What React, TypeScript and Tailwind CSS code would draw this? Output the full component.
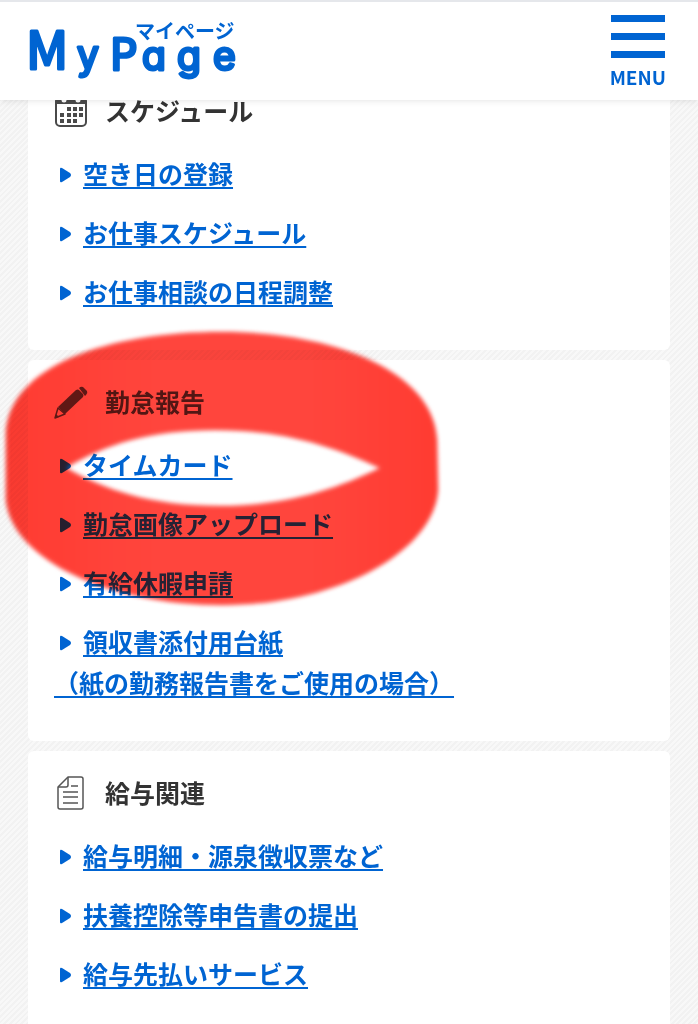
import { ReactNode } from 'react'

type MenuLink = { label: string; note?: string }
type MenuGroup = { title: string; icon: ReactNode; links: MenuLink[] }

function CalendarIcon() {
  return (
    <svg viewBox="0 0 34 36" className="w-[34px] h-9" fill="none" aria-hidden="true">
      <rect x="2" y="5" width="30" height="29" rx="4" stroke="#4a4a4a" strokeWidth="2" />
      <path d="M2 12V8q0-3 3-3h24q3 0 3 3v4z" fill="#4a4a4a" />
      <path d="M10 2v6M24 2v6" stroke="#fff" strokeWidth="5" strokeLinecap="round" />
      <path d="M10 2v5M24 2v5" stroke="#4a4a4a" strokeWidth="2" strokeLinecap="round" />
      <path
        d="M13 15h4v4h-4zM19 15h4v4h-4zM25 15h4v4h-4zM6 21h4v4H6zM13 21h4v4h-4zM19 21h4v4h-4zM25 21h4v4h-4zM6 27h4v4H6zM13 27h4v4h-4zM19 27h4v4h-4z"
        fill="#4a4a4a"
      />
    </svg>
  )
}

function PencilIcon() {
  return (
    <svg viewBox="0 -1 34 36" className="w-[34px] h-9" aria-hidden="true">
      <path d="M4 23 22 6q2-1 3 0l4 4q1 1 0 3L11 30z" fill="#444" />
      <path d="M25 4q2-2 4-1l4 4q1 2-1 4l-1 1z" fill="#444" />
      <path d="M4 24 1 34l10-4z" fill="none" stroke="#444" strokeWidth="1.5" strokeLinejoin="round" />
      <path d="M1 34l1-4 3 3z" fill="#444" />
    </svg>
  )
}

function DocumentIcon() {
  return (
    <svg viewBox="0 -1 34 36" className="w-[34px] h-9" fill="none" stroke="#555" strokeWidth="1.5" aria-hidden="true">
      <path d="M14 2h13q2 0 2 2v28q0 2-2 2H6q-2 0-2-2V12z" strokeLinejoin="round" />
      <path d="M14 2v8q0 2-2 2H4M17 11h7M9 17h15M9 22h15M9 28h15" />
    </svg>
  )
}

const groups: MenuGroup[] = [
  {
    title: 'スケジュール',
    icon: <CalendarIcon />,
    links: [{ label: '空き日の登録' }, { label: 'お仕事スケジュール' }, { label: 'お仕事相談の日程調整' }],
  },
  {
    title: '勤怠報告',
    icon: <PencilIcon />,
    links: [
      { label: 'タイムカード' },
      { label: '勤怠画像アップロード' },
      { label: '有給休暇申請' },
      { label: '領収書添付用台紙', note: '（紙の勤務報告書をご使用の場合）' },
    ],
  },
  {
    title: '給与関連',
    icon: <DocumentIcon />,
    links: [{ label: '給与明細・源泉徴収票など' }, { label: '扶養控除等申告書の提出' }, { label: '給与先払いサービス' }],
  },
]

function Logo() {
  return (
    <svg viewBox="0 0 216 70" className="w-[216px] h-[70px] overflow-visible" fill="#0064d2" stroke="#0064d2" strokeLinejoin="round" role="img" aria-label="MyPage マイページ">
      <g strokeWidth="3" fontWeight="400" className="font-['Noto_Sans_CJK_JP',sans-serif]">
        <text x="-2" y="55" fontSize="52">M</text>
        <text x="82" y="56" fontSize="43">P</text>
      </g>
      <g strokeWidth="3" fontWeight="400" fontSize="39" className="font-['Inter',sans-serif] [font-feature-settings:'cv11']">
        <text x="49" y="55">y</text>
        <text x="114" y="56">a</text>
        <text x="149" y="56">g</text>
        <text x="185" y="56">e</text>
      </g>
      <text x="107" y="25" fontSize="20" fontWeight="700" strokeWidth="0" className="font-['Noto_Sans_CJK_JP',sans-serif]">マイページ</text>
    </svg>
  )
}

function Header() {
  return (
    <header className="sticky top-0 z-20 h-[100px] flex items-start justify-between pl-7 pr-8 bg-white border-t-2 border-gray-200 shadow-md shadow-black/5">
      <a href="#" className="mt-3"><Logo /></a>
      <button type="button" className="mt-[13px] flex flex-col items-center text-[#0064d2]">
        <span className="flex flex-col gap-[11px] w-[54px]">
          <span className="h-[7px] bg-[#0064d2]" />
          <span className="h-[7px] bg-[#0064d2]" />
          <span className="h-[7px] bg-[#0064d2]" />
        </span>
        <span className="mt-[7px] text-[19px] leading-6 font-bold">MENU</span>
      </button>
    </header>
  )
}

function GroupCard({ group }: { group: MenuGroup }) {
  return (
    <section className="bg-white rounded-md pt-[21px] pb-[38px] px-[26px] last:grow last:rounded-b-none last:pb-7">
      <h2 className="flex items-center gap-[17px] text-[25px] leading-10 font-bold text-[#333]">
        {group.icon}
        {group.title}
      </h2>
      <ul className="mt-[23px] flex flex-col gap-[18px]">
        {group.links.map((link) => (
          <li key={link.label} className="text-[25px] leading-[41px] font-bold text-[#0064d2]">
            <svg viewBox="0 0 11 16" className="inline-block align-[1px] w-[11px] h-4 ml-[6px] mr-3" fill="currentColor" aria-hidden="true">
              <path d="M0 2Q0 0 2 1l8 5q2 2 0 4l-8 5q-2 1-2-1z" />
            </svg>
            <a href="#" className="underline decoration-2 underline-offset-[3px]">
              {link.label}
              {link.note && <><br />{link.note}</>}
            </a>
          </li>
        ))}
      </ul>
    </section>
  )
}

// Freehand marker ring laid over the attendance card
function MarkerRing() {
  const ring =
    'M6 435C8 365 110 332 222 332C335 332 434 372 437 440L438 490C434 550 340 605 222 605C110 605 12 560 6 500ZM66 468C105 444 150 430 215 430C285 430 335 447 380 468C335 490 285 506 220 506C150 506 105 490 66 468Z'
  return (
    <>
      <svg viewBox="0 0 450 620" className="absolute top-0 left-0 z-30 w-[450px] h-[620px] pointer-events-none blur-[2px] mix-blend-multiply" aria-hidden="true">
        <defs>
          <linearGradient id="marker" x1="0" x2="1" y1="0" y2="0">
            <stop offset="0" stopColor="#ff3a30" />
            <stop offset="0.35" stopColor="#ff463e" />
            <stop offset="0.7" stopColor="#ff463e" />
            <stop offset="1" stopColor="#ff3a30" />
          </linearGradient>
        </defs>
        <path d={ring} fill="url(#marker)" fillRule="evenodd" />
      </svg>
      <svg viewBox="0 0 450 620" className="absolute top-0 left-0 z-30 w-[450px] h-[620px] pointer-events-none blur-[2px] opacity-15" aria-hidden="true">
        <path d={ring} fill="#ff443b" fillRule="evenodd" />
      </svg>
    </>
  )
}

export default function App() {
  return (
    <div className="relative min-h-screen flex flex-col font-['Noto_Sans_CJK_JP',sans-serif] bg-[repeating-linear-gradient(135deg,#f8f8f8_0px,#f8f8f8_2px,#f2f2f2_2px,#f2f2f2_4px)]">
      <Header />
      <main className="-mt-[31px] grow flex flex-col gap-[10px] px-7">
        {groups.map((group) => (
          <GroupCard key={group.title} group={group} />
        ))}
      </main>
      <MarkerRing />
    </div>
  )
}
